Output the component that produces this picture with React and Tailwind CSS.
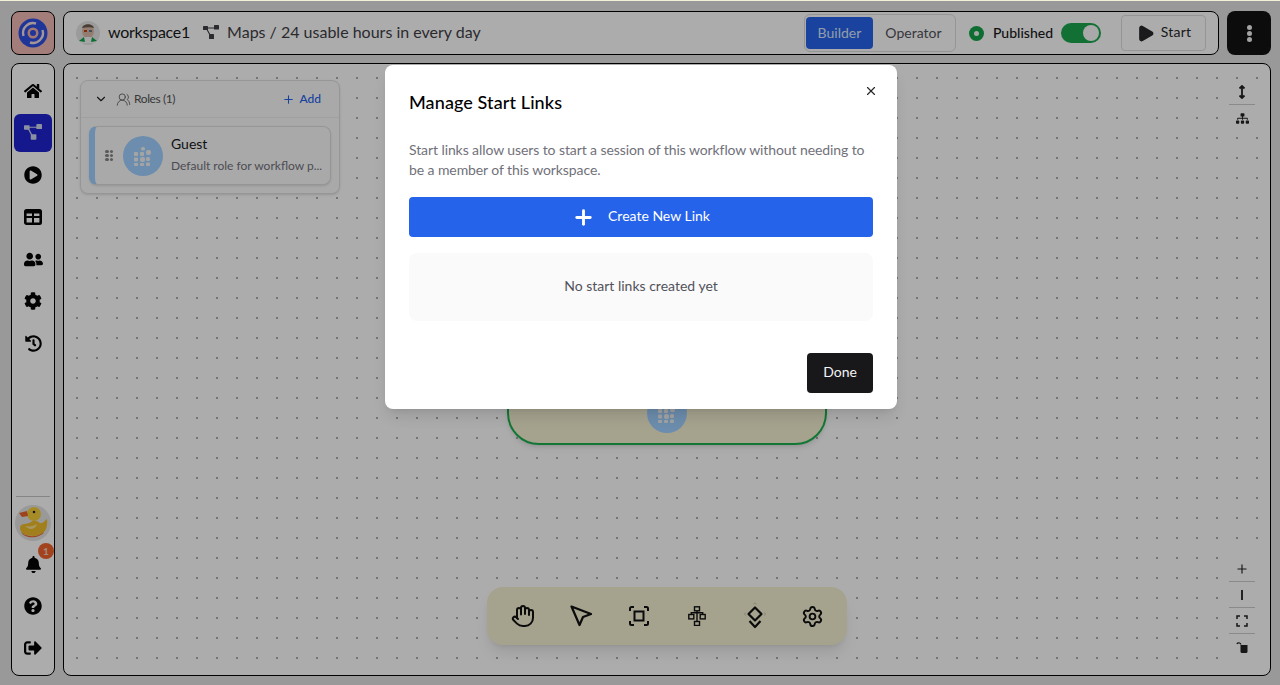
import { ChevronDown, Hand, Play, Plus, Settings, UsersRound, X } from "lucide-react";
import { FaBell, FaCog, FaHistory, FaHome, FaPlayCircle, FaQuestionCircle, FaSignOutAlt, FaSitemap, FaUserFriends } from "react-icons/fa";

function MapIcon({ className }) {
  return (
    <svg viewBox="0 0 16 16" className={className} fill="currentColor">
      <rect x="0" y="1" width="5" height="4" rx="0.6" />
      <rect x="11" y="0" width="5" height="4.5" rx="0.6" />
      <rect x="6" y="9" width="5" height="5" rx="0.6" />
      <path d="M4 2.4h8v1H4zM3.4 4.4l1-.5 3 5.6-1 .5z" />
    </svg>
  );
}

function RoleGlyph({ className }) {
  return (
    <svg viewBox="0 0 20 20" className={className} fill="currentColor">
      <rect x="1" y="6" width="4" height="4" rx="1" />
      <rect x="7" y="6" width="4" height="4" rx="1" />
      <rect x="13" y="4" width="5" height="5" rx="2" />
      <rect x="1" y="11.500" width="4" height="4" rx="1" />
      <rect x="7" y="11" width="5" height="5" rx="2" />
      <rect x="13" y="11" width="4" height="4" rx="1.500" />
      <rect x="1" y="17" width="4" height="3" rx="1" />
      <rect x="7" y="17" width="4" height="3" rx="1" />
      <rect x="13" y="16.500" width="4" height="3.500" rx="1" />
      <rect x="8" y="1" width="4" height="3.500" rx="1.500" />
    </svg>
  );
}

function Logo() {
  return (
    <svg viewBox="0 0 30 30" className="w-[30px] h-[30px]">
      <circle cx="15" cy="15" r="14.500" fill="#2f4ee0" />
      <path d="M5.500 18a10 10 0 0 1 12.500-12.500" fill="none" stroke="#f0dede" strokeWidth="2.400" />
      <path d="M24.500 12a10 10 0 0 1-12.500 12.500" fill="none" stroke="#f0dede" strokeWidth="2.400" />
      <circle cx="15" cy="15" r="5.500" fill="#f0b0a8" />
      <circle cx="15" cy="15" r="3" fill="#2f4ee0" />
    </svg>
  );
}

function WorkspaceAvatar() {
  return (
    <svg viewBox="0 0 24 24" className="w-6 h-6 rounded-full bg-[#e5e5e5]">
      <ellipse cx="12" cy="10" rx="6" ry="7" fill="#d9b8a6" />
      <path d="M6 7c1-5 11-5 12 0-3-1-8-1-12 0z" fill="#6d5a4d" />
      <rect x="8" y="9" width="3" height="2" fill="#c2410c" />
      <rect x="13" y="9" width="3" height="2" fill="#64748b" />
      <path d="M3 22c1-4 5-6 9-6s8 2 9 6z" fill="#f5f5f5" />
      <path d="M3 20l5-4 1 5zM21 20l-5-4-1 5z" fill="#16a34a" />
    </svg>
  );
}

function Duck() {
  return (
    <svg viewBox="0 0 36 36" className="w-9 h-9 rounded-full bg-[#e2e2e2]">
      <circle cx="19" cy="9" r="7" fill="#f5cf3a" />
      <path d="M4 8l8-2 1 5-6 1z" fill="#e8632c" />
      <circle cx="19" cy="7" r="1.300" fill="#222" />
      <path d="M5 23c0-6 8-3 11-6 4-3 8 0 9 1 3 1 5-3 7-4 1 8-1 16-13 17-9 0-14-3-14-8z" fill="#efbc2c" />
      <path d="M10 21c4 1 9 0 12-2-1 5-7 7-12 2z" fill="#f7e08a" />
      <path d="M6 27c4 5 16 6 23 0-3 6-19 8-23 0z" fill="#e8632c" />
    </svg>
  );
}

function TableIcon() {
  return (
    <svg viewBox="0 0 18 16" className="w-[18px] h-4" fill="none" stroke="currentColor" strokeWidth="2.600">
      <rect x="1.300" y="1.300" width="15.400" height="13.400" rx="1.200" />
      <path d="M1 8h16M9 1v14" strokeWidth="2" />
      <path d="M1 3h16" strokeWidth="3" />
    </svg>
  );
}

function PointerIcon() {
  return (
    <svg viewBox="0 0 24 24" className="w-6 h-6" fill="none" stroke="currentColor" strokeWidth="2.200" strokeLinejoin="round">
      <path d="M2.500 2.500 22 10l-8 3-3.500 8z" />
    </svg>
  );
}

function FrameIcon() {
  return (
    <svg viewBox="0 0 24 24" className="w-6 h-6" fill="none" stroke="currentColor" strokeWidth="2">
      <path d="M7 3H4.500A1.500 1.500 0 0 0 3 4.500V7M17 3h2.500A1.500 1.500 0 0 1 21 4.500V7M7 21H4.500A1.500 1.500 0 0 1 3 19.500V17M17 21h2.500a1.500 1.500 0 0 0 1.500-1.500V17" />
      <rect x="7.500" y="7.500" width="9" height="9" />
    </svg>
  );
}

function TreeIcon() {
  return (
    <svg viewBox="0 0 18 20" className="w-[18px] h-5" fill="none" stroke="currentColor" strokeWidth="1.400">
      <rect x="6.500" y="0.800" width="5" height="4" />
      <rect x="0.800" y="8.500" width="5" height="4.400" />
      <rect x="12.200" y="8.500" width="5" height="4.400" />
      <rect x="6.500" y="15.500" width="5" height="4" />
      <path d="M9 5v10.500M3.300 8.500V6.800h11.400v1.700" />
    </svg>
  );
}

function DiamondDownIcon() {
  return (
    <svg viewBox="0 0 24 30" className="w-6 h-[30px]" fill="none" stroke="currentColor" strokeWidth="2.200" strokeLinejoin="round">
      <path d="M12 6.500 18.500 13 12 19.500 5.500 13z" />
      <path d="m6.500 20 5.500 6 5.500-6" />
      <path d="m10.500 3 1.500-1 1.500 1M2.500 11.500 1.500 13l1 1.500M21.500 11.500l1 1.500-1 1.500" stroke="#c9c6ac" strokeWidth="1" />
    </svg>
  );
}

function SideIcon({ children }) {
  return <div className="h-[38px] w-[38px] flex items-center justify-center text-[#050505]">{children}</div>;
}

function ToolDivider() {
  return <div className="h-px w-[26px] bg-[#cccccc]" />;
}

export default function App() {
  return (
    <div className="relative w-[1280px] h-[685px] overflow-hidden bg-[#e2e2e2] font-['Lato',sans-serif] border-t border-t-[#f3f1da]">
      <div className="flex flex-col gap-2 pl-[11px] pr-[9px] pt-[10px] pb-[9px] h-full">
        {/* Top bar */}
        <div className="flex gap-2 h-[44px] shrink-0">
          <div className="w-[44px] rounded-lg border border-black bg-[#f0b8b4] flex items-center justify-center">
            <Logo />
          </div>
          <div className="w-[1156px] rounded-lg border border-black bg-[#fefefe] flex items-center pl-3 pr-3">
            <WorkspaceAvatar />
            <span className="ml-2 -mt-[2px] text-[16px] text-[#18181b] tracking-[-0.25px]">workspace1</span>
            <MapIcon className="ml-[13px] -mt-px w-4 h-4 text-[#3f3f46]" />
            <span className="ml-2 -mt-[2px] text-[16px] text-[#3f3f46]">Maps / 24 usable hours in every day</span>
            <div className="ml-auto flex items-center">
              <div className="flex items-center w-[152px] h-[38px] rounded-md border border-[#dcdcdc] p-px pl-[1px]">
                <div className="w-[67px] h-8 pb-[2px] rounded bg-[#2563eb] text-[#dbe6fb] text-[14px] flex items-center justify-center">Builder</div>
                <div className="flex-1 pb-[2px] text-center text-[14px] text-[#52525b]">Operator</div>
              </div>
              <div className="ml-[13px] w-[15px] h-[15px] rounded-full bg-[#16a34a] flex items-center justify-center">
                <div className="w-[5px] h-[5px] rounded-full bg-[#f5f5f5]" />
              </div>
              <span className="ml-[9px] -mt-[2px] text-[14px] font-medium text-[#18181b]">Published</span>
              <div className="ml-2 w-10 h-5 rounded-full bg-[#1ba64e] flex items-center justify-end pr-[2px]">
                <div className="w-4 h-4 rounded-full bg-[#fafafa]" />
              </div>
              <div className="ml-5 w-[85px] h-9 rounded border border-[#dcdcdc] flex items-center justify-center gap-[6px] text-[#27272a]">
                <Play className="w-[19px] h-[19px]" fill="currentColor" />
                <span className="text-[14px] tracking-[0.2px] -mt-[3px]">Start</span>
              </div>
            </div>
          </div>
          <div className="w-[44px] rounded-lg bg-[#121212] flex flex-col items-center justify-center gap-[1px]">
            <div className="w-[5px] h-[5px] rounded-full bg-[#f0f0f0]" />
            <div className="w-[5px] h-[5px] rounded-full bg-[#f0f0f0]" />
            <div className="w-[5px] h-[5px] rounded-full bg-[#f0f0f0]" />
          </div>
        </div>

        {/* Body */}
        <div className="flex gap-2 flex-1 min-h-0">
          {/* Sidebar */}
          <div className="w-[44px] rounded-lg border border-black bg-[#fefefe] flex flex-col items-center pt-[8px] pb-[8px]">
            <div className="flex flex-col gap-1">
              <SideIcon><FaHome className="w-[18px] h-[18px]" /></SideIcon>
              <div className="h-[38px] w-[38px] rounded-md bg-[#1f24cf] flex items-center justify-center text-[#cfd6ee]">
                <MapIcon className="w-[18px] h-[18px]" />
              </div>
              <SideIcon><FaPlayCircle className="w-[18px] h-[18px]" /></SideIcon>
              <SideIcon><TableIcon /></SideIcon>
              <SideIcon><FaUserFriends className="w-[19px] h-[19px]" /></SideIcon>
              <SideIcon><FaCog className="w-[18px] h-[18px]" /></SideIcon>
              <SideIcon><FaHistory className="w-[17px] h-[17px]" /></SideIcon>
            </div>
            <div className="mt-auto w-[34px] h-px bg-[#c4c4c4] mb-2" />
            <Duck />
            <div className="relative mt-1 flex flex-col gap-1">
              <SideIcon><FaBell className="w-[17px] h-[17px]" /></SideIcon>
              <div className="absolute left-[24px] top-[-2px] w-4 h-4 rounded-full bg-[#f0642d] text-[#f0d0c0] text-[10px] font-bold flex items-center justify-center">1</div>
              <SideIcon><FaQuestionCircle className="w-[18px] h-[18px]" /></SideIcon>
              <SideIcon><FaSignOutAlt className="w-[18px] h-[18px]" /></SideIcon>
            </div>
          </div>

          {/* Canvas */}
          <div className="relative w-[1208px] rounded-lg border border-black bg-[#fefefe] bg-[radial-gradient(circle,#555555_0.5px,transparent_0.9px)] bg-[length:20px_20px] bg-[position:3px_4px] overflow-hidden">
            {/* Roles panel */}
            <div className="absolute left-[16px] top-[16px] w-[260px] rounded-lg border border-[#dedede] bg-[#fafafa] shadow-sm">
              <div className="h-[37px] flex items-center pl-[13px] pr-[18px] border-b border-[#ececec]">
                <ChevronDown className="w-[14px] h-[14px] text-[#222222]" />
                <UsersRound className="ml-[8px] w-[15px] h-[15px] text-[#666666]" strokeWidth={1.500} />
                <span className="ml-[3px] text-[12px] tracking-[-0.4px] text-[#555555]">Roles (1)</span>
                <Plus className="ml-auto w-[13px] h-[13px] text-[#2563eb]" />
                <span className="ml-1 text-[12px] font-medium text-[#2563eb]">Add</span>
              </div>
              <div className="p-2">
                <div className="h-[59px] rounded-lg border border-[#dedede] border-l-[6px] border-l-[#9fd0ff] flex items-center bg-[#fafafa] shadow-sm">
                  <div className="ml-[10px] grid grid-cols-2 gap-x-[1px] gap-y-[1px]">
                    {[0, 1, 2, 3, 4, 5].map((i) => (
                      <div key={i} className="w-[3.500px] h-[3px] rounded-full bg-[#888888]" />
                    ))}
                  </div>
                  <div className="ml-[10px] w-10 h-10 shrink-0 rounded-full bg-[#9fd0ff] flex items-center justify-center text-[#f2f2f2]">
                    <RoleGlyph className="w-5 h-5" />
                  </div>
                  <div className="ml-2 min-w-0 -mt-[2px]">
                    <div className="text-[14px] text-[#18181b] leading-5 -mt-px">Guest</div>
                    <div className="mt-1 text-[12px] text-[#71717a] leading-4 whitespace-nowrap">Default role for workflow p...</div>
                  </div>
                </div>
              </div>
            </div>

            {/* Side tools */}
            <div className="absolute left-[1162px] top-[15px] w-[32px] bg-[#fefefe] flex flex-col items-center text-[#222222]">
              <div className="h-[25px] flex items-center">
                <svg viewBox="0 0 10 14" className="w-[10px] h-[14px]" fill="none" stroke="currentColor" strokeWidth="1.800">
                  <path d="M5 2v10M2.500 3.500 5 1l2.500 2.500M2.500 10.500 5 13l2.500-2.500" />
                </svg>
              </div>
              <ToolDivider />
              <div className="h-[27px] flex items-center">
                <FaSitemap className="w-[13px] h-[13px]" />
              </div>
            </div>
            <div className="absolute left-[1162px] top-[492px] w-[32px] bg-[#fefefe] flex flex-col items-center text-[#222222]">
              <div className="h-[25px] flex items-center"><Plus className="w-[14px] h-[14px]" strokeWidth={2} /></div>
              <ToolDivider />
              <div className="h-[25px] flex items-center"><div className="w-[2px] h-[10px] bg-[#333333]" /></div>
              <ToolDivider />
              <div className="h-[25px] flex items-center">
                <svg viewBox="0 0 12 12" className="w-3 h-3" fill="none" stroke="currentColor" strokeWidth="1.500">
                  <path d="M1 4V1h3M8 1h3v3M1 8v3h3M11 8v3H8" />
                </svg>
              </div>
              <ToolDivider />
              <div className="h-[25px] flex items-center">
                <svg viewBox="0 0 12 12" className="w-3 h-3" fill="currentColor">
                  <path d="M4.500 4h7v6.500a1.500 1.500 0 0 1-1.500 1.500H6a1.500 1.500 0 0 1-1.500-1.500z" />
                  <path d="M5 3.500A2.300 2.300 0 0 0 .8 3" fill="none" stroke="currentColor" strokeWidth="1.200" />
                </svg>
              </div>
            </div>

            {/* Start node, mostly behind the dialog */}
            <div className="absolute left-[443px] top-[221px] w-[320px] h-[160px] rounded-[32px] border-2 border-[#1bb04f] bg-[#f3efd2] shadow-md flex justify-center items-end pb-[10px]">
              <div className="w-10 h-10 rounded-full bg-[#9fd0ff] flex items-center justify-center text-[#f0f0f0]">
                <RoleGlyph className="w-5 h-5" />
              </div>
            </div>

            {/* Bottom toolbar */}
            <div className="absolute left-[423px] top-[523px] w-[360px] h-[58px] rounded-2xl bg-[#f3efd2] shadow-lg grid grid-cols-[repeat(6,58px)] justify-center items-center text-[#111111]">
              <div className="flex justify-center pl-px"><Hand className="w-6 h-6" strokeWidth={2} /></div>
              <div className="flex justify-center pl-px"><PointerIcon /></div>
              <div className="flex justify-center pl-px"><FrameIcon /></div>
              <div className="flex justify-center pl-px"><TreeIcon /></div>
              <div className="flex justify-center pl-px"><DiamondDownIcon /></div>
              <div className="flex justify-center"><Settings className="w-[23px] h-[23px]" strokeWidth={2} /></div>
            </div>
          </div>
        </div>
      </div>

      {/* Backdrop and dialog */}
      <div className="absolute inset-0 bg-black/[0.32] flex justify-center items-start pt-[64px] pl-[2px]">
        <div className="relative w-[512px] h-[344px] rounded-lg bg-white p-6 shadow-lg">
          <X className="absolute right-[19px] top-[19px] w-[14px] h-[14px] text-[#27272a]" strokeWidth={2} />
          <h2 className="-mt-px text-[18px] leading-7 font-medium text-black tracking-[0.1px]">Manage Start Links</h2>
          <p className="mt-6 text-[14px] leading-5 text-[#71717a] tracking-[-0.09px]">
            Start links allow users to start a session of this workflow without needing to be a member of this workspace.
          </p>
          <button className="mt-[17px] w-full h-10 pb-[3px] rounded-sm bg-[#2563eb] text-white text-[14px] flex items-center justify-center gap-[13px]">
            <Plus className="w-[23px] h-[23px] mt-[3px]" strokeWidth={3} />
            Create New Link
          </button>
          <div className="mt-4 h-[68px] pb-[3px] rounded-lg bg-[#fafafa] flex items-center justify-center text-[14px] text-[#52525b]">
            No start links created yet
          </div>
          <div className="mt-8 flex justify-end">
            <button className="w-[66px] h-10 pb-[3px] rounded bg-[#18181b] text-[#f4f4f5] text-[14px]">Done</button>
          </div>
        </div>
      </div>
    </div>
  );
}
